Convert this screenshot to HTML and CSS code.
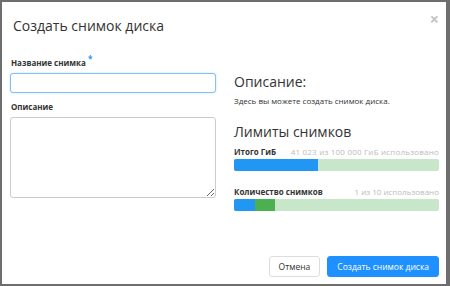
FILE: index.html
```html
<!DOCTYPE html>
<html lang="ru">
<head>
    <meta charset="UTF-8">
    <title>Создать снимок диска</title>
    <link rel="stylesheet" href="styles.css">
</head>
<body>

<div class="modal">
    <div class="modal-header">
        <h3>Создать снимок диска</h3>
        <span class="close">&times;</span>
    </div>

    <div class="modal-body">
        <!-- Левая колонка: форма -->
        <div class="left">
            <div class="field">
                <label for="name">Название снимка <span class="req">*</span></label>
                <input type="text" id="name" class="focused">
            </div>
            <div class="field">
                <label for="desc">Описание</label>
                <textarea id="desc"></textarea>
            </div>
        </div>

        <!-- Правая колонка: описание и лимиты -->
        <div class="right">
            <h4>Описание:</h4>
            <p class="help">Здесь вы можете создать снимок диска.</p>
            <h4>Лимиты снимков</h4>

            <div class="quota">
                <div class="quota-head">
                    <strong>Итого ГиБ</strong>
                    <span class="wide">41 023 из 100 000 ГиБ использовано</span>
                </div>
                <div class="bar">
                    <div class="used" style="width: 41%"></div>
                </div>
            </div>

            <div class="quota">
                <div class="quota-head">
                    <strong>Количество снимков</strong>
                    <span>1 из 10 использовано</span>
                </div>
                <div class="bar">
                    <div class="used" style="width: 10%"></div>
                    <div class="added" style="width: 10%"></div>
                </div>
            </div>
        </div>
    </div>

    <div class="modal-footer">
        <button class="btn">Отмена</button>
        <button class="btn btn-primary">Создать снимок диска</button>
    </div>
</div>

</body>
</html>
```

FILE: styles.css
```css
/* Общие стили */
body {
    margin: 0;
    background-color: #6e6e6e;
    font-family: 'Open Sans', 'Liberation Sans', sans-serif;
    color: #333;
}

.modal {
    margin: 2px 4px 0 2px;
    width: 444px;
    height: 282px;
    background-color: #fff;
    display: flex;
    flex-direction: column;
}

/* Заголовок */
.modal-header {
    display: flex;
    justify-content: space-between;
    align-items: flex-start;
    padding: 14px 11px 0 11px;
    height: 34px;
}

.modal-header h3 {
    margin: 0;
    font-size: 14px;
    font-weight: normal;
    line-height: 20px;
}

.close {
    color: #c4c4c4;
    font-size: 16px;
    font-weight: bold;
    line-height: 14px;
    margin-right: -4px;
    margin-top: -4px;
}

/* Тело */
.modal-body {
    display: flex;
    gap: 18px;
    padding: 0 7px 0 8px;
    flex: 1;
}

.left {
    width: 206px;
}

.right {
    flex: 1;
    padding-top: 22px;
}

.field {
    margin-top: 9px;
}

.field:first-child {
    margin-top: 8px;
}

label {
    display: block;
    font-size: 8px;
    line-height: 10px;
    font-weight: bold;
    color: #333;
    margin-bottom: 5px;
    margin-left: 1px;
}

.req {
    color: #2196f3;
    vertical-align: top;
    position: relative;
    top: -4px;
}

input, textarea {
    box-sizing: border-box;
    width: 206px;
    border: 1px solid #ccc;
    border-radius: 3px;
    font-family: inherit;
    display: block;
    margin: 0;
}

input {
    height: 20px;
}

input.focused {
    border-color: #86bff0;
    box-shadow: 0 0 2px rgba(33, 150, 243, 0.35);
}

textarea {
    height: 81px;
    resize: vertical;
}

.right h4 {
    margin: 0;
    font-size: 14px;
    font-weight: normal;
    line-height: 20px;
}

.help {
    margin: 4px 0 16px 0;
    font-size: 8px;
    line-height: 10px;
}

/* Лимиты */
.quota {
    margin-top: 5px;
}

.quota + .quota {
    margin-top: 16px;
}

.quota-head {
    display: flex;
    justify-content: space-between;
    font-size: 8px;
    line-height: 10px;
    margin-bottom: 2px;
}

.quota-head span {
    color: #bbb;
}

.quota-head .wide {
    letter-spacing: 0.2px;
}

.bar {
    display: flex;
    height: 12px;
    background-color: #c8e6c9;
    border-radius: 2px;
    overflow: hidden;
}

.used {
    background-color: #2196f3;
}

.added {
    background-color: #4caf50;
}

/* Подвал */
.modal-footer {
    display: flex;
    justify-content: flex-end;
    gap: 7px;
    padding: 0 7px 7px 0;
}

.btn {
    height: 21px;
    padding: 0 9px;
    font-family: inherit;
    font-size: 8.5px;
    color: #333;
    background-color: #fff;
    border: 1px solid #ddd;
    border-radius: 3px;
}

.btn-primary {
    color: #fff;
    background-color: #1e90ff;
    border-color: #1e90ff;
}
```
